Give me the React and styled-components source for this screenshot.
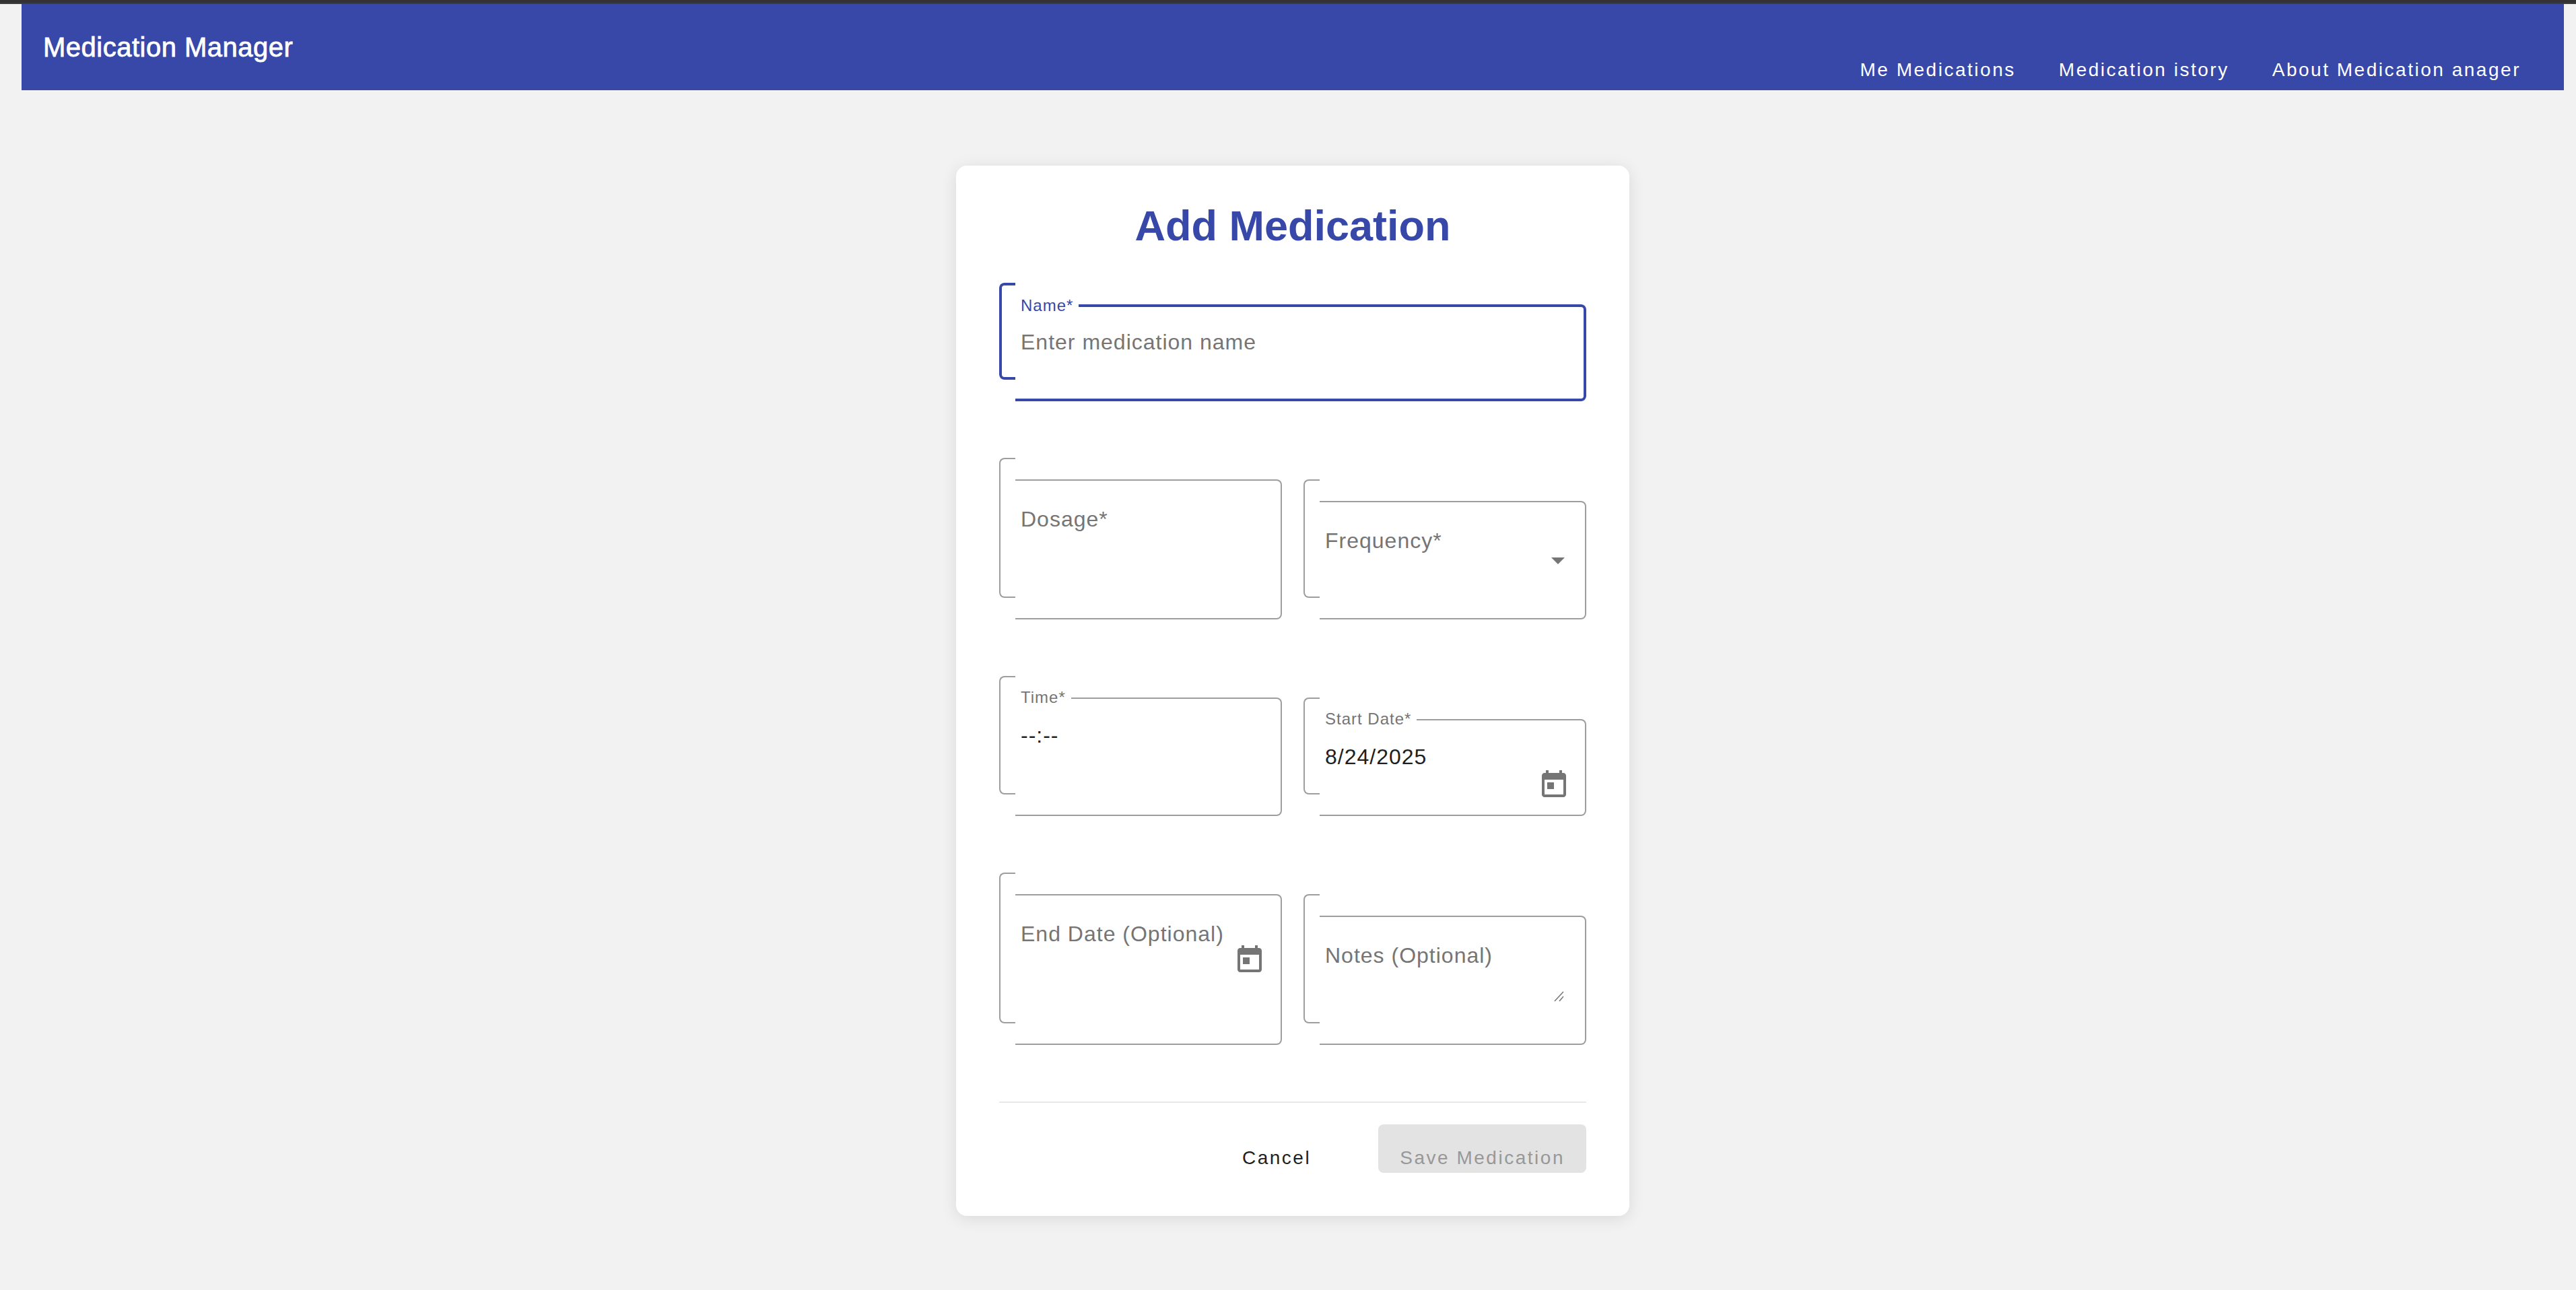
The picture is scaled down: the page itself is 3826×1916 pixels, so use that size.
import React, { useState } from "react";
import styled, { createGlobalStyle, css } from "styled-components";

const primary = "#3748a8";
const muted = "#757575";
const outline = "#9e9e9e";
const ink = "#1f1f1f";

const GlobalStyle = createGlobalStyle`
  *, *::before, *::after { box-sizing: border-box; }
  body {
    margin: 0;
    background: #f2f2f2;
    color: ${ink};
    font-family: "Liberation Sans", Arial, sans-serif;
  }
  button, input, select, textarea { font: inherit; letter-spacing: inherit; }
`;

const mediumWeight = css`
  -webkit-text-stroke: 0.02em currentColor;
`;

const TopStrip = styled.div`
  height: 6px;
  background: #333;
  border-bottom: 2px solid #3c3c3c;
`;

const Page = styled.div`
  padding: 0 18px 0 32px;
`;

const Header = styled.header`
  display: flex;
  justify-content: space-between;
  align-items: center;
  min-height: 128px;
  padding: 0 32px;
  background: ${primary};
  color: #fff;
`;

const Brand = styled.span`
  font-size: 40px;
  line-height: 64px;
  letter-spacing: 0.0125em;
  ${mediumWeight}
`;

const Nav = styled.nav`
  display: flex;
  align-self: flex-end;
`;

const NavLink = styled.a`
  padding: 0 32px;
  color: inherit;
  font-size: 28px;
  line-height: 60px;
  letter-spacing: 0.09em;
  text-decoration: none;
`;

const Card = styled.main`
  max-width: 1000px;
  margin: 112px auto;
  padding: 48px 64px 64px;
  border-radius: 16px;
  background: #fff;
  box-shadow: 0 4px 24px rgba(0, 0, 0, 0.1);
`;

const Title = styled.h1`
  margin: 0 0 44px;
  color: ${primary};
  font-size: 63px;
  line-height: 82px;
  font-weight: 700;
  text-align: center;
`;

const Form = styled.form`
  display: flex;
  flex-direction: column;
  gap: 84px;
`;

const Row = styled.div`
  display: grid;
  grid-template-columns: repeat(${(p) => p.$columns}, 1fr);
  gap: 32px;
  min-height: ${(p) => p.$height}px;
`;

const FieldBox = styled.div`
  --line: ${(p) => (p.$active ? `4px solid ${primary}` : `2px solid ${outline}`)};
  display: grid;
  grid-template-columns: 24px minmax(0, 1fr);
  color: ${(p) => (p.$active ? primary : muted)};
  font-size: 32px;
  line-height: 40px;
  letter-spacing: 0.03125em;

  & + & {
    margin-top: 32px;
  }
`;

const LeadingEdge = styled.div`
  margin-bottom: 32px;
  border: var(--line);
  border-right: 0;
  border-radius: 8px 0 0 8px;
`;

const FieldBody = styled.div`
  position: relative;
  display: flex;
  align-items: flex-start;
  margin-top: 32px;
  padding: ${(p) => (p.$active ? 32 : 34)}px 22px 0 8px;
  border: var(--line);
  border-left: 0;
  border-radius: 0 8px 8px 0;
`;

const Label = styled.label`
  position: absolute;
  left: 0;
  padding: 0 8px;
  white-space: nowrap;
  pointer-events: none;
  ${(p) =>
    p.$floating
      ? css`
          top: -14px;
          background: #fff;
          font-size: 24px;
          line-height: 24px;
        `
      : css`
          top: 37px;
        `}
`;

const control = css`
  flex: 1;
  min-width: 0;
  height: 40px;
  padding: 0;
  border: 0;
  outline: 0;
  background: transparent;
  color: ${ink};
  line-height: 40px;
`;

const Input = styled.input`
  ${control}
  &::placeholder {
    color: ${muted};
    opacity: 1;
  }
`;

const Select = styled.select`
  ${control}
  appearance: none;
`;

const TextArea = styled.textarea`
  ${control}
  height: 112px;
  resize: none;
`;

const IconButton = styled.button`
  display: flex;
  margin: 38px 0 0;
  padding: 0;
  border: 0;
  background: none;
  color: ${muted};
`;

const Arrow = styled.svg`
  margin: 48px 8px 0 0;
`;

const Grip = styled.svg`
  margin: 76px 8px 0 0;
`;

const Actions = styled.div`
  display: flex;
  justify-content: flex-end;
  gap: 68px;
  padding-top: 32px;
  border-top: 2px solid #e8e8e8;
`;

const ActionButton = styled.button`
  height: 72px;
  padding: 28px 32px 0;
  border: 0;
  border-radius: 8px;
  background: transparent;
  color: ${ink};
  font-size: 28px;
  line-height: 44px;
  letter-spacing: 0.09em;

  &:disabled {
    background: #e3e3e3;
    color: #989898;
  }
`;

function CalendarButton({ label }) {
  return (
    <IconButton type="button" aria-label={label}>
      <svg width="48" height="48" viewBox="0 0 24 24" fill="currentColor" aria-hidden="true">
        <path d="M19 3h-1V1h-2v2H8V1H6v2H5c-1.11 0-1.99.9-1.99 2L3 19c0 1.1.89 2 2 2h14c1.1 0 2-.9 2-2V5c0-1.1-.9-2-2-2zm0 16H5V8h14v11zM7 10h5v5H7z" />
      </svg>
    </IconButton>
  );
}

function Field({ id, label, active, floating, children }) {
  return (
    <FieldBox $active={active}>
      <LeadingEdge />
      <FieldBody $active={active}>
        {children}
        <Label htmlFor={id} $floating={floating}>
          {label}
        </Label>
      </FieldBody>
    </FieldBox>
  );
}

export default function App() {
  const [time, setTime] = useState("--:--");
  const [startDate, setStartDate] = useState("8/24/2025");

  return (
    <>
      <GlobalStyle />
      <TopStrip />
      <Page>
        <Header>
          <Brand>Medication Manager</Brand>
          <Nav>
            <NavLink href="#medications">Me Medications</NavLink>
            <NavLink href="#history">Medication istory</NavLink>
            <NavLink href="#about">About Medication anager</NavLink>
          </Nav>
        </Header>

        <Card>
          <Title>Add Medication</Title>
          <Form onSubmit={(e) => e.preventDefault()}>
            <Row $columns={1} $height={176}>
              <Field id="name" label="Name*" active floating>
                <Input id="name" type="text" placeholder="Enter medication name" />
              </Field>
            </Row>

            <Row $columns={2} $height={240}>
              <Field id="dosage" label="Dosage*">
                <Input id="dosage" type="text" />
              </Field>
              <Field id="frequency" label="Frequency*">
                <Select id="frequency" defaultValue="">
                  <option value="" />
                </Select>
                <Arrow width="20" height="10" viewBox="0 0 20 10" aria-hidden="true">
                  <path d="M0 0h20L10 10z" fill="currentColor" />
                </Arrow>
              </Field>
            </Row>

            <Row $columns={2} $height={208}>
              <Field id="time" label="Time*" floating>
                <Input id="time" type="text" value={time} onChange={(e) => setTime(e.target.value)} />
              </Field>
              <Field id="start" label="Start Date*" floating>
                <Input
                  id="start"
                  type="text"
                  value={startDate}
                  onChange={(e) => setStartDate(e.target.value)}
                />
                <CalendarButton label="Choose start date" />
              </Field>
            </Row>

            <Row $columns={2} $height={256}>
              <Field id="end" label="End Date (Optional)">
                <Input id="end" type="text" />
                <CalendarButton label="Choose end date" />
              </Field>
              <Field id="notes" label="Notes (Optional)">
                <TextArea id="notes" />
                <Grip width="16" height="16" viewBox="0 0 16 16" aria-hidden="true">
                  <path d="M1 15L14 1M8 15l6-7" fill="none" stroke="currentColor" strokeWidth="1.5" />
                </Grip>
              </Field>
            </Row>

            <Actions>
              <ActionButton type="button">Cancel</ActionButton>
              <ActionButton type="submit" disabled>
                Save Medication
              </ActionButton>
            </Actions>
          </Form>
        </Card>
      </Page>
    </>
  );
}
